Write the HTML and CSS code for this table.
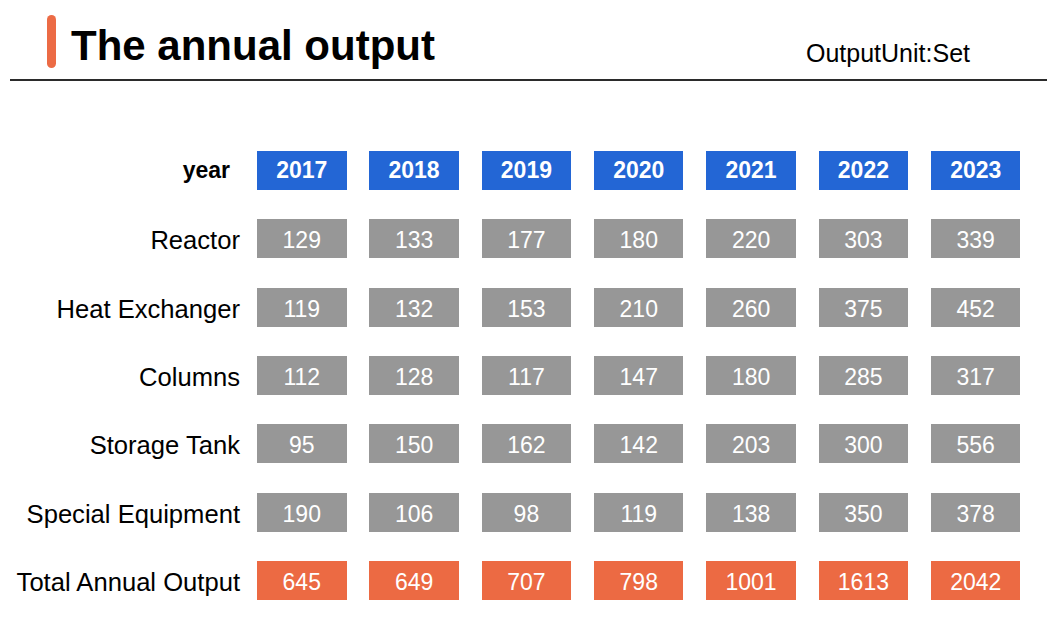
FILE: index.html
```html
<!DOCTYPE html>
<html lang="en">
<head>
<meta charset="utf-8">
<title>The annual output</title>
<link rel="stylesheet" href="styles.css">
</head>
<body>
<header class="header">
  <span class="accent"></span>
  <h1 class="title">The annual output</h1>
  <div class="unit">OutputUnit:Set</div>
</header>
<main class="table">
  <div class="row row-year">
    <div class="label label-year">year</div>
    <div class="cells">
      <div class="cell cell-year">2017</div>
      <div class="cell cell-year">2018</div>
      <div class="cell cell-year">2019</div>
      <div class="cell cell-year">2020</div>
      <div class="cell cell-year">2021</div>
      <div class="cell cell-year">2022</div>
      <div class="cell cell-year">2023</div>
    </div>
  </div>
  <div class="row">
    <div class="label">Reactor</div>
    <div class="cells">
      <div class="cell cell-gray">129</div>
      <div class="cell cell-gray">133</div>
      <div class="cell cell-gray">177</div>
      <div class="cell cell-gray">180</div>
      <div class="cell cell-gray">220</div>
      <div class="cell cell-gray">303</div>
      <div class="cell cell-gray">339</div>
    </div>
  </div>
  <div class="row">
    <div class="label">Heat Exchanger</div>
    <div class="cells">
      <div class="cell cell-gray">119</div>
      <div class="cell cell-gray">132</div>
      <div class="cell cell-gray">153</div>
      <div class="cell cell-gray">210</div>
      <div class="cell cell-gray">260</div>
      <div class="cell cell-gray">375</div>
      <div class="cell cell-gray">452</div>
    </div>
  </div>
  <div class="row">
    <div class="label">Columns</div>
    <div class="cells">
      <div class="cell cell-gray">112</div>
      <div class="cell cell-gray">128</div>
      <div class="cell cell-gray">117</div>
      <div class="cell cell-gray">147</div>
      <div class="cell cell-gray">180</div>
      <div class="cell cell-gray">285</div>
      <div class="cell cell-gray">317</div>
    </div>
  </div>
  <div class="row">
    <div class="label">Storage Tank</div>
    <div class="cells">
      <div class="cell cell-gray">95</div>
      <div class="cell cell-gray">150</div>
      <div class="cell cell-gray">162</div>
      <div class="cell cell-gray">142</div>
      <div class="cell cell-gray">203</div>
      <div class="cell cell-gray">300</div>
      <div class="cell cell-gray">556</div>
    </div>
  </div>
  <div class="row">
    <div class="label">Special Equipment</div>
    <div class="cells">
      <div class="cell cell-gray">190</div>
      <div class="cell cell-gray">106</div>
      <div class="cell cell-gray">98</div>
      <div class="cell cell-gray">119</div>
      <div class="cell cell-gray">138</div>
      <div class="cell cell-gray">350</div>
      <div class="cell cell-gray">378</div>
    </div>
  </div>
  <div class="row">
    <div class="label">Total Annual Output</div>
    <div class="cells">
      <div class="cell cell-total">645</div>
      <div class="cell cell-total">649</div>
      <div class="cell cell-total">707</div>
      <div class="cell cell-total">798</div>
      <div class="cell cell-total">1001</div>
      <div class="cell cell-total">1613</div>
      <div class="cell cell-total">2042</div>
    </div>
  </div>
</main>
</body>
</html>
```
FILE: styles.css
```css
* {
  box-sizing: border-box;
}

html, body {
  margin: 0;
  padding: 0;
  background: #ffffff;
}

body {
  width: 1060px;
  height: 625px;
  overflow: hidden;
  font-family: "Liberation Sans", Arial, sans-serif;
  color: #000000;
}

.header {
  display: flex;
  align-items: flex-start;
  margin-left: 10px;
  width: 1037px;
  height: 81px;
  border-bottom: 2px solid #2b2b2b;
}

.accent {
  display: block;
  width: 9px;
  height: 53px;
  margin-top: 15px;
  margin-left: 37px;
  border-radius: 5px;
  background: #ec6b45;
}

.title {
  margin: 22px 0 0 15px;
  font-size: 42px;
  font-weight: bold;
  line-height: 48px;
}

.unit {
  margin: 38px 77px 0 auto;
  font-size: 25px;
  line-height: 30px;
}

.table {
  display: flex;
  flex-direction: column;
  gap: 29.33px;
  margin-top: 70px;
}

.row {
  display: flex;
  height: 39px;
}

.label {
  width: 240px;
  margin-right: 17px;
  padding-top: 4px;
  font-size: 25.6px;
  line-height: 35px;
  text-align: right;
  white-space: nowrap;
}

.label-year {
  padding-top: 1px;
  padding-right: 10px;
  font-size: 23px;
  font-weight: bold;
  line-height: 37px;
}

.cells {
  display: flex;
  gap: 22.83px;
}

.cell {
  width: 89.5px;
  height: 39px;
  padding-top: 4px;
  font-size: 23px;
  line-height: 35px;
  text-align: center;
  color: #ffffff;
}

.cell-year {
  padding-top: 1px;
  line-height: 37px;
  font-weight: bold;
  background: #2366d5;
}

.cell-gray {
  background: #979797;
}

.cell-total {
  background: #ec6a43;
}
```
